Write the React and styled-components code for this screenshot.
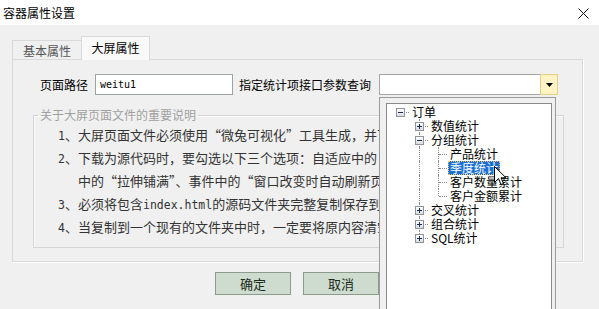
import React from "react";
import styled, { createGlobalStyle, css } from "styled-components";

const GlobalStyle = createGlobalStyle`
  html, body {
    margin: 0;
    padding: 0;
    background: #f0f0f0;
  }
  body {
    font-family: "Noto Sans CJK SC", "Noto Sans", sans-serif;
    color: #000;
  }
`;

const treeRows = [
  { text: "订单", level: 0, toggle: "minus", line: "none", guides: [] },
  { text: "数值统计", level: 1, toggle: "plus", line: "full", guides: [false] },
  { text: "分组统计", level: 1, toggle: "minus", line: "full", guides: [false] },
  { text: "产品统计", level: 2, line: "full", guides: [false, true] },
  { text: "季度统计", level: 2, line: "full", guides: [false, true], selected: true },
  { text: "客户数量累计", level: 2, line: "full", guides: [false, true] },
  { text: "客户金额累计", level: 2, line: "top", guides: [false, true] },
  { text: "交叉统计", level: 1, toggle: "plus", line: "full", guides: [false] },
  { text: "组合统计", level: 1, toggle: "plus", line: "full", guides: [false] },
  { text: "SQL统计", level: 1, toggle: "plus", line: "top", guides: [false] },
];

const App = () => {
  return (
    <Window lang="zh-CN">
      <GlobalStyle />
      <TitleBar>
        <Title>容器属性设置</Title>
        <Close>
          <svg width="11" height="11" viewBox="0 0 11 11">
            <path d="M0.5 0.5 L10.5 10.5 M10.5 0.5 L0.5 10.5" stroke="#111" strokeWidth="1" />
          </svg>
        </Close>
      </TitleBar>

      <Content>
        <TabStrip>
          <Tab>基本属性</Tab>
          <Tab $active>大屏属性</Tab>
        </TabStrip>

        <Panel>
          <FormRow>
            <Label>页面路径</Label>
            <TextBox>weitu1</TextBox>
            <Label $wide>指定统计项接口参数查询</Label>
            <Combo>
              <ComboField />
              <DropButton>
                <svg width="7" height="4" viewBox="0 0 7 4">
                  <path d="M0 0 L7 0 L3.5 4 Z" fill="#000" />
                </svg>
              </DropButton>

              <Popup>
                <Tree>
                  {treeRows.map((row) => (
                    <TreeRow key={row.text}>
                      {row.guides.map((g, i) => (
                        <Guide key={i} $show={g} />
                      ))}
                      <Node $line={row.line}>
                        {row.toggle && <Toggle $plus={row.toggle === "plus"} />}
                      </Node>
                      <NodeText $selected={row.selected}>{row.text}</NodeText>
                    </TreeRow>
                  ))}
                </Tree>
              </Popup>
            </Combo>
          </FormRow>

          <Group>
            <Legend>关于大屏页面文件的重要说明</Legend>
            <Note>
              <Mono>1</Mono>、大屏页面文件必须使用“微兔可视化”工具生成，并下载为源代码。
            </Note>
            <Note>
              <Mono>2</Mono>、下载为源代码时，要勾选以下三个选项：自适应中的“原始尺寸”
            </Note>
            <Note $indent>中的“拉伸铺满”、事件中的“窗口改变时自动刷新页面”。</Note>
            <Note>
              <Mono>3</Mono>、必须将包含<Mono>index.html</Mono>的源码文件夹完整复制保存到指定目录。
            </Note>
            <Note>
              <Mono>4</Mono>、当复制到一个现有的文件夹中时，一定要将原内容清空，再复制。
            </Note>
          </Group>
        </Panel>

        <Buttons>
          <Button>确定</Button>
          <Button>取消</Button>
        </Buttons>
      </Content>

      <Cursor>
        <svg width="13" height="20" viewBox="0 0 13 20">
          <path
            d="M0.5 0.5 L0.5 16.5 L4.5 12.5 L7 18.5 L9.5 17.5 L7 11.8 L12 11.8 Z"
            fill="#fff"
            stroke="#000"
            strokeWidth="1"
          />
        </svg>
      </Cursor>
    </Window>
  );
};

export default App;

const Window = styled.div`
  position: relative;
  width: 599px;
  height: 309px;
  overflow: hidden;
  background: #f0f0f0;
`;

const TitleBar = styled.div`
  display: flex;
  align-items: center;
  justify-content: space-between;
  height: 25px;
  padding: 0 10px 0 3px;
  background: #fff;
  box-sizing: border-box;
`;

const Title = styled.div`
  font-size: 12px;
  line-height: 14px;
  color: #000;
`;

const Close = styled.div`
  display: flex;
  align-items: center;
  margin-top: 1px;
`;

const Content = styled.div`
  padding: 11px 16px 0 12px;
`;

const TabStrip = styled.div`
  display: flex;
  align-items: flex-end;
  height: 23px;
`;

const Tab = styled.div`
  box-sizing: border-box;
  width: 69px;
  height: 19px;
  display: flex;
  align-items: center;
  justify-content: center;
  font-size: 12px;
  color: #555;
  background: #f0f0f0;
  border: 1px solid #d9d9d9;
  border-bottom: none;
  border-right: none;

  ${(p) =>
    p.$active &&
    css`
      height: 24px;
      margin-bottom: -1px;
      position: relative;
      z-index: 1;
      color: #000;
      background: #f9f9f9;
      border-right: 1px solid #d9d9d9;
      padding-bottom: 2px;
    `}
`;

const Panel = styled.div`
  box-sizing: border-box;
  width: 571px;
  height: 203px;
  padding: 14px 0 0 27px;
  background: #f0f0f0;
  border: 1px solid #d9d9d9;
  box-shadow: 1px 1px 0 #fff;
`;

const FormRow = styled.div`
  display: flex;
  align-items: center;
  height: 21px;
`;

const Label = styled.div`
  font-size: 12px;
  line-height: 14px;
  white-space: nowrap;
  margin-right: ${(p) => (p.$wide ? "8px" : "7px")};
  margin-left: ${(p) => (p.$wide ? "6px" : "0")};
`;

const TextBox = styled.div`
  box-sizing: border-box;
  width: 138px;
  height: 21px;
  padding: 0 4px;
  display: flex;
  align-items: center;
  background: #fff;
  border: 1px solid #9da39d;
  font-family: "DejaVu Sans Mono", "Liberation Mono", monospace;
  font-size: 10px;
`;

const Combo = styled.div`
  position: relative;
  display: flex;
  width: 179px;
  height: 21px;
`;

const ComboField = styled.div`
  flex: 1;
  box-sizing: border-box;
  background: #fff;
  border: 1px solid #a5a5a5;
  border-right: none;
`;

const DropButton = styled.div`
  box-sizing: border-box;
  width: 18px;
  height: 21px;
  display: flex;
  align-items: center;
  justify-content: center;
  background: #fff2c4;
  border: 1px solid #e6cf86;
`;

const Popup = styled.div`
  position: absolute;
  left: 0;
  top: 23px;
  z-index: 5;
  box-sizing: border-box;
  width: 177px;
  height: 240px;
  padding: 5px 0 0 6px;
  background: #f0f0f0;
  border: 1px solid #9b9b9b;
`;

const Tree = styled.div`
  box-sizing: border-box;
  width: 166px;
  height: 230px;
  padding: 1px 0 0 4px;
  background: #fff;
  border: 1px solid #8a8a8a;
`;

const TreeRow = styled.div`
  display: flex;
  align-items: center;
  height: 14px;
`;

const Guide = styled.div`
  position: relative;
  width: 19px;
  height: 14px;
  flex-shrink: 0;

  ${(p) =>
    p.$show &&
    css`
      &::before {
        content: "";
        position: absolute;
        left: 9px;
        top: 0;
        bottom: 0;
        border-left: 1px dotted #8c8c8c;
      }
    `}
`;

const Node = styled.div`
  position: relative;
  width: 19px;
  height: 14px;
  flex-shrink: 0;
  display: flex;
  align-items: center;
  padding-left: 5px;
  box-sizing: border-box;

  &::before {
    content: "";
    position: absolute;
    left: 9px;
    top: 0;
    display: ${(p) => (p.$line === "none" ? "none" : "block")};
    height: ${(p) => (p.$line === "top" ? "7px" : "14px")};
    border-left: 1px dotted #8c8c8c;
  }

  &::after {
    content: "";
    position: absolute;
    left: 10px;
    right: 1px;
    top: 7px;
    border-top: 1px dotted #8c8c8c;
  }
`;

const Toggle = styled.div`
  position: relative;
  z-index: 1;
  box-sizing: border-box;
  width: 9px;
  height: 9px;
  border: 1px solid #8f949c;
  background: linear-gradient(#ffffff, #d8dbe0);

  &::before {
    content: "";
    position: absolute;
    left: 1px;
    top: 3px;
    width: 5px;
    height: 1px;
    background: #1d2b55;
  }

  ${(p) =>
    p.$plus &&
    css`
      &::after {
        content: "";
        position: absolute;
        left: 3px;
        top: 1px;
        width: 1px;
        height: 5px;
        background: #1d2b55;
      }
    `}
`;

const NodeText = styled.div`
  box-sizing: border-box;
  height: 14px;
  padding: 0 2px;
  font-size: 12px;
  line-height: 14px;
  white-space: nowrap;
  color: #000;

  ${(p) =>
    p.$selected &&
    css`
      color: #fff;
      background: #1c6fd1;
      outline: 1px dotted #e9c46a;
      outline-offset: -1px;
    `}
`;

const Group = styled.fieldset`
  box-sizing: border-box;
  width: 531px;
  height: 141px;
  margin: 12px 0 0 -7px;
  padding: 0 0 0 24px;
  min-width: 0;
  overflow: hidden;
  border: 1px solid #d6d6d6;
  box-shadow: inset 1px 1px 0 #fafafa;
`;

const Legend = styled.legend`
  margin-left: -20px;
  padding: 0 2px;
  font-size: 12px;
  line-height: 16px;
  color: #a0a0a0;
`;

const Note = styled.div`
  font-size: 13px;
  line-height: 23px;
  height: 23px;
  color: #333;
  white-space: nowrap;
  font-feature-settings: "fwid" 1;
  padding-left: ${(p) => (p.$indent ? "20px" : "0")};
`;

const Mono = styled.span`
  font-family: "DejaVu Sans Mono", "Liberation Mono", monospace;
  font-size: 11.5px;
  font-feature-settings: normal;
`;

const Buttons = styled.div`
  display: flex;
  justify-content: center;
  gap: 12px;
  margin-top: 10px;
  padding-right: 1px;
`;

const Button = styled.div`
  box-sizing: border-box;
  width: 76px;
  height: 23px;
  display: flex;
  align-items: center;
  justify-content: center;
  font-size: 13px;
  color: #1a2a1a;
  background: #cedccf;
  border: 1px solid #8b9c8b;
`;

const Cursor = styled.div`
  position: absolute;
  left: 494px;
  top: 166px;
  z-index: 10;
  line-height: 0;
`;
